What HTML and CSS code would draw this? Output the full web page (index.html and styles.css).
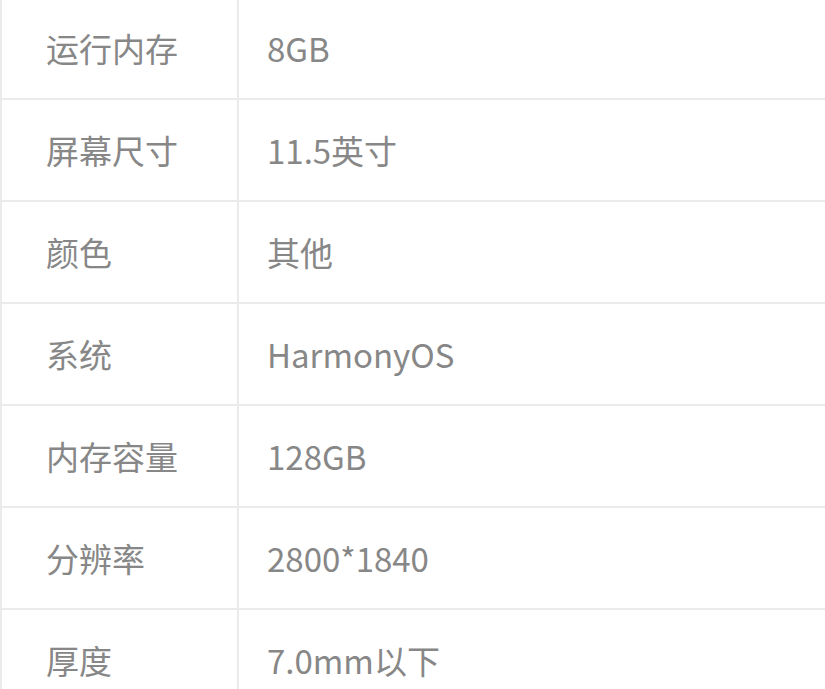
FILE: index.html
```html
<!DOCTYPE html>
<html lang="zh-CN">
<head>
    <meta charset="UTF-8">
    <meta name="viewport" content="width=device-width, initial-scale=1.0">
    <title>规格参数</title>
    <link rel="stylesheet" href="styles.css">
</head>
<body>
    <div class="spec-table">
        <div class="spec-row">
            <div class="spec-name">运行内存</div>
            <div class="spec-value">8GB</div>
        </div>
        <div class="spec-row">
            <div class="spec-name">屏幕尺寸</div>
            <div class="spec-value">11.5英寸</div>
        </div>
        <div class="spec-row">
            <div class="spec-name">颜色</div>
            <div class="spec-value">其他</div>
        </div>
        <div class="spec-row">
            <div class="spec-name">系统</div>
            <div class="spec-value">HarmonyOS</div>
        </div>
        <div class="spec-row">
            <div class="spec-name">内存容量</div>
            <div class="spec-value">128GB</div>
        </div>
        <div class="spec-row">
            <div class="spec-name">分辨率</div>
            <div class="spec-value">2800*1840</div>
        </div>
        <div class="spec-row">
            <div class="spec-name">厚度</div>
            <div class="spec-value">7.0mm以下</div>
        </div>
    </div>
</body>
</html>
```

FILE: styles.css
```css
body {
    margin: 0;
    background-color: #fff;
    font-family: "Noto Sans CJK SC", "Noto Sans", sans-serif;
    overflow: hidden;
}
.spec-table {
    margin-top: -2px;
    border-left: 2px solid #ebebeb;
}
.spec-row {
    display: grid;
    grid-template-columns: 237px 1fr;
    height: 100px;
    border-bottom: 2px solid #ebebeb;
}
.spec-name,
.spec-value {
    display: flex;
    align-items: center;
    font-size: 33px;
    color: #878787;
}
.spec-name {
    padding-left: 44px;
    border-right: 2px solid #ebebeb;
}
.spec-value {
    padding-left: 28px;
}
```
